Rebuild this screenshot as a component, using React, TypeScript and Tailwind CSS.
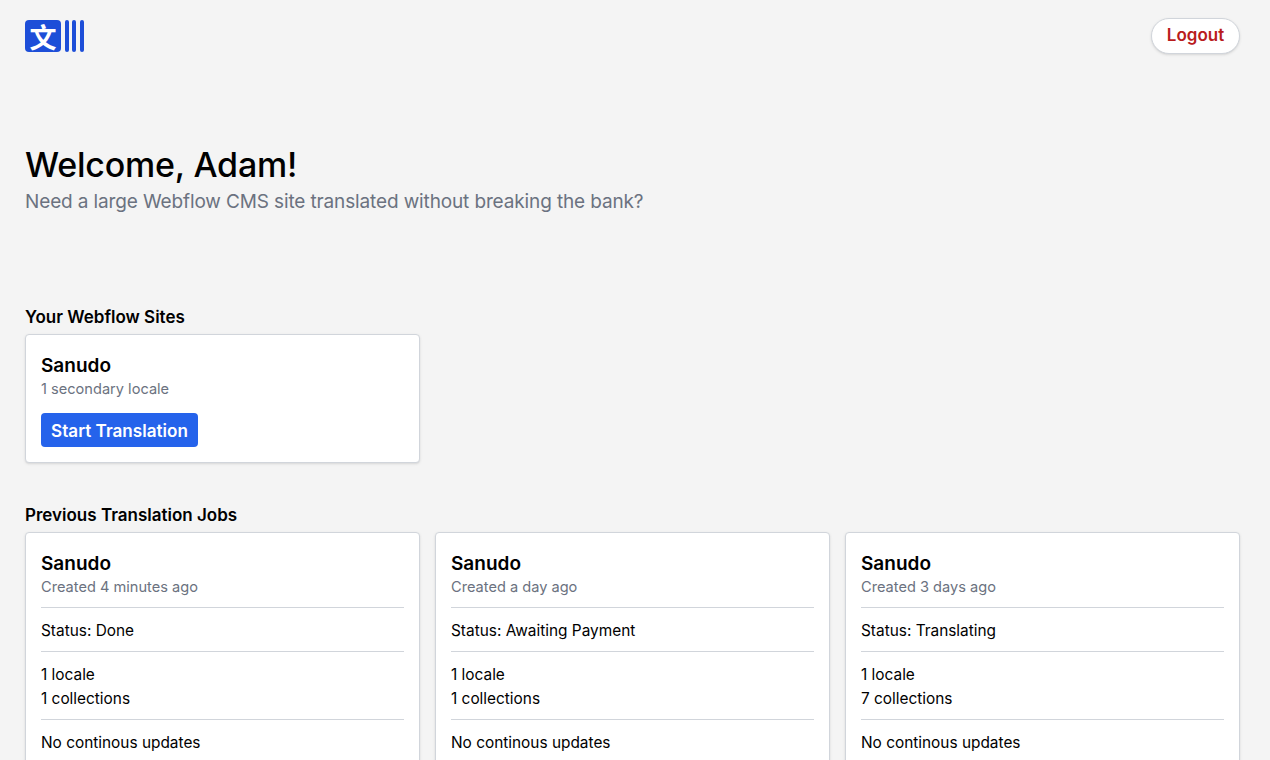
const jobs = [
  { created: 'Created 4 minutes ago', status: 'Status: Done', collections: '1 collections' },
  { created: 'Created a day ago', status: 'Status: Awaiting Payment', collections: '1 collections' },
  { created: 'Created 3 days ago', status: 'Status: Translating', collections: '7 collections' },
]

function Logo() {
  return (
    <div className="flex h-8 items-stretch gap-[3.5px]">
      <div className="flex w-9 items-center justify-center rounded-[4px] bg-[#1d4ed8] text-[27px] leading-none font-bold text-white font-['Noto_Sans_CJK_SC',sans-serif]">
        文
      </div>
      <span className="w-1 rounded-full bg-[#1d4ed8]" />
      <span className="w-1 rounded-full bg-[#1d4ed8]" />
      <span className="w-1 rounded-full bg-[#1d4ed8]" />
    </div>
  )
}

export default function App() {
  return (
    <div className="h-screen overflow-hidden bg-[#f4f4f4] pr-[30px] pl-[25px] font-['Inter',sans-serif] text-black">
      {/* Header */}
      <header className="flex items-start justify-between pt-[18px]">
        <div className="pt-0.5">
          <Logo />
        </div>
        <button className="h-9 w-[89px] rounded-full border border-[#d1d5db] bg-white text-[17px] font-semibold text-[#b91c1c] shadow-sm">
          Logout
        </button>
      </header>

      {/* Welcome */}
      <section className="mt-[88px]">
        <h1 className="text-[34px] leading-[45px] font-medium tracking-[-0.2px]">Welcome, Adam!</h1>
        <p className="mt-px text-[19px] leading-[28px] tracking-[-0.13px] text-[#6b7280]">
          Need a large Webflow CMS site translated without breaking the bank?
        </p>
      </section>

      {/* Sites */}
      <section className="mt-[87px]">
        <h2 className="text-[17px] leading-[28px] font-semibold">Your Webflow Sites</h2>
        <div className="mt-[3px] w-[395px] rounded-[4px] border border-[#d1d5db] bg-white px-[15px] pt-[18px] pb-[15px] shadow-sm">
          <h3 className="text-[19px] leading-[25px] font-semibold">Sanudo</h3>
          <p className="pt-px text-[14.6px] leading-[20px] text-[#6b7280]">1 secondary locale</p>
          <button className="mt-[14px] h-[34px] w-[157px] rounded-[4px] bg-[#2563eb] pt-0.5 text-[17.1px] font-semibold text-white">
            Start Translation
          </button>
        </div>
      </section>

      {/* Jobs */}
      <section className="mt-[38px]">
        <h2 className="text-[17px] leading-[28px] font-semibold">Previous Translation Jobs</h2>
        <div className="mt-[3px] grid grid-cols-3 gap-[15px]">
          {jobs.map((job) => (
            <div
              key={job.created}
              className="rounded-[4px] border border-[#d1d5db] bg-white px-[15px] pt-[18px] pb-[15px] shadow-sm"
            >
              <h3 className="text-[19px] leading-[25px] font-semibold">Sanudo</h3>
              <p className="pt-px text-[14.6px] leading-[20px] text-[#6b7280]">{job.created}</p>
              <div className="mt-[10px] border-t border-[#d1d5db] pt-[11px] pb-2 text-[15.4px] leading-[24px]">
                {job.status}
              </div>
              <div className="border-t border-[#d1d5db] pt-[11px] pb-2 text-[15.4px] leading-[24px]">
                <p>1 locale</p>
                <p>{job.collections}</p>
              </div>
              <div className="border-t border-[#d1d5db] pt-[11px] pb-2 text-[15.4px] leading-[24px]">
                No continous updates
              </div>
            </div>
          ))}
        </div>
      </section>
    </div>
  )
}
